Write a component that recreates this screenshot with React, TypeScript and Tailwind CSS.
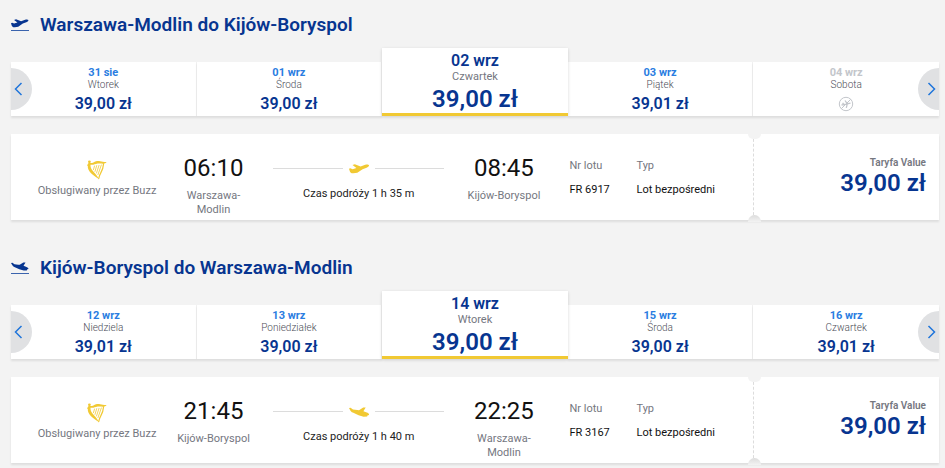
import { clsx } from "clsx";

interface Fare {
  date: string;
  weekday: string;
  price?: string;
  selected?: boolean;
}

interface Flight {
  departure: string;
  origin: string;
  arrival: string;
  destination: string;
  duration: string;
  number: string;
  price: string;
}

interface Journey {
  id: string;
  title: string;
  direction: "takeoff" | "landing";
  fares: Fare[];
  flight: Flight;
}

const journeys: Journey[] = [
  {
    id: "outbound",
    title: "Warszawa-Modlin do Kijów-Boryspol",
    direction: "takeoff",
    fares: [
      { date: "31 sie", weekday: "Wtorek", price: "39,00 zł" },
      { date: "01 wrz", weekday: "Środa", price: "39,00 zł" },
      { date: "02 wrz", weekday: "Czwartek", price: "39,00 zł", selected: true },
      { date: "03 wrz", weekday: "Piątek", price: "39,01 zł" },
      { date: "04 wrz", weekday: "Sobota" },
    ],
    flight: {
      departure: "06:10",
      origin: "Warszawa-Modlin",
      arrival: "08:45",
      destination: "Kijów-Boryspol",
      duration: "1 h 35 m",
      number: "FR 6917",
      price: "39,00 zł",
    },
  },
  {
    id: "inbound",
    title: "Kijów-Boryspol do Warszawa-Modlin",
    direction: "landing",
    fares: [
      { date: "12 wrz", weekday: "Niedziela", price: "39,01 zł" },
      { date: "13 wrz", weekday: "Poniedziałek", price: "39,00 zł" },
      { date: "14 wrz", weekday: "Wtorek", price: "39,00 zł", selected: true },
      { date: "15 wrz", weekday: "Środa", price: "39,00 zł" },
      { date: "16 wrz", weekday: "Czwartek", price: "39,01 zł" },
    ],
    flight: {
      departure: "21:45",
      origin: "Kijów-Boryspol",
      arrival: "22:25",
      destination: "Warszawa-Modlin",
      duration: "1 h 40 m",
      number: "FR 3167",
      price: "39,00 zł",
    },
  },
];

const planePaths = {
  takeoff:
    "M0 5.8 1.3 5.3 3.6 6.2 7.4 5 3.5 2 5.8 1.3 11.6 3.5 16.2 1.8C18 1.1 19.6 1.4 20 2.2c.3.9-.8 1.9-2.4 2.5L13.6 6.2 8.3 9.7 4.4 10.3C2.5 10.6 1.4 9.8.9 8.6Z",
  landing:
    "M0 2 1.6 1.8 4 3.6 8.3 4 10 4.2 14.2 1.4 16.7 1.6 14.4 5.2 17.8 6.6C19.4 7.2 20.3 8.1 20 8.9L18.4 9.4 18.2 10.6 14.6 10.8 9.6 9.2 3.8 6.6C2.4 6 1.7 5.2 1.2 4.2Z",
};

const HeaderPlane = ({ direction }: { direction: Journey["direction"] }) => (
  <svg viewBox="0 0 18 14" className="w-[18px] h-[14px]" aria-hidden="true">
    <path
      d={planePaths[direction]}
      transform="translate(0 .2) scale(.87)"
      fill="#073590"
    />
    <path d="M0 12.5h18" stroke="#3a63ad" />
  </svg>
);

const RoutePlane = ({ direction }: { direction: Journey["direction"] }) => (
  <svg viewBox="0 0 20 11" className="w-5 h-[11px]" aria-hidden="true">
    <path d={planePaths[direction]} fill="#f1c933" />
  </svg>
);

const Harp = () => (
  <svg viewBox="0 0 20 20" className="w-5 h-5" aria-hidden="true">
    <g fill="#f1c933">
      <circle cx="2.4" cy="1.8" r="1.4" />
      <path d="M1.2 3.2C3 2.6 4.6 3.2 6.4 2.4 8.8 1.3 10.4.8 13 1.2c2.2.4 4 .9 6.6.8-.8 1.3-2.2 1.8-3.8 1.7-2.4-.2-4.6-.4-6.8.3C6.6 4.7 4.9 5 3.5 4.8c-.2 2.3.7 4.4 2.4 6.3 2 2.3 4.2 4.3 5.9 7.9C8.7 16.7 5.9 14.9 3.8 12.9 1.7 10.7.6 8.6.8 6.1L.1 5.6Z" />
    </g>
    <g fill="none" stroke="#f1c933" strokeLinecap="round">
      <path
        d="M16.6 3.6c-.3 4-1.3 6.5-2.7 9-1 1.7-1.7 3.600-2.200 6"
        strokeWidth="1.2"
      />
      <path
        d="M7.5 6 6.5 9.6M9.7 5.6 8 11.4M12 5.4 9.5 13M14.3 5 11 14.6"
        strokeWidth=".8"
      />
    </g>
  </svg>
);

const NoFlight = () => (
  <svg
    viewBox="0 0 16 16"
    className="w-4 h-4"
    fill="none"
    stroke="#c3c6cb"
    role="img"
    aria-label="Brak lotów"
  >
    <circle cx="8" cy="8" r="6.7" />
    <path d="M3.3 12.7l9.4-9.4" />
    <path
      d="M3.5 9 12.5 7.2M7 4.5l2.300 3.300-1 4M4.800 6.800l.8 2.800"
      strokeWidth="1.3"
    />
  </svg>
);

const ArrowButton = ({ side }: { side: "left" | "right" }) => (
  <button
    type="button"
    aria-label={side === "left" ? "Poprzednie dni" : "Następne dni"}
    className={clsx(
      "absolute bottom-[6px] flex h-[42px] w-[21px] items-center bg-[#e0e1e3]",
      side === "left"
        ? "left-0 justify-start rounded-r-full pl-[3px]"
        : "right-0 justify-end rounded-l-full pr-[3px]",
    )}
  >
    <svg
      viewBox="0 0 9 14"
      className="w-[9px] h-[14px]"
      fill="none"
      stroke="#1f75db"
      strokeWidth="1.5"
    >
      <path d={side === "left" ? "M7.5 1l-6 6 6 6" : "M1.5 1l6 6-6 6"} />
    </svg>
  </button>
);

const FareDay = ({ fare }: { fare: Fare }) => {
  if (fare.selected) {
    return (
      <button
        type="button"
        aria-pressed="true"
        className="relative flex flex-col items-center border-b-3 border-[#f1c933] bg-white pt-[5px] font-semibold text-[#073590] shadow-[0_1px_3px_rgba(0,0,0,0.16)]"
      >
        <span className="text-base leading-4">{fare.date}</span>
        <span className="text-[11px] leading-4 font-normal text-[#75777f]">
          {fare.weekday}
        </span>
        <span className="text-2xl leading-7">{fare.price}</span>
      </button>
    );
  }

  return (
    <button
      type="button"
      disabled={!fare.price}
      className="flex flex-col items-center border-r border-[#f1f1f1] bg-white pt-[5px] shadow-[0_2px_2px_rgba(0,0,0,0.09)] last-of-type:border-r-0"
    >
      <span
        className={clsx(
          "text-[11px] leading-3 font-bold",
          fare.price ? "text-[#2a7de1]" : "text-[#c3c6cb]",
        )}
      >
        {fare.date}
      </span>
      <span className="text-[10px] leading-3 font-light text-[#4b4d57]">
        {fare.weekday}
      </span>
      <span className="mt-px flex h-6 items-center text-base font-semibold text-[#073590]">
        {fare.price ?? <NoFlight />}
      </span>
    </button>
  );
};

const Stop = ({ time, station }: { time: string; station: string }) => (
  <div className="w-[75px] text-center">
    <p className="text-2xl leading-6 text-[#111]">{time}</p>
    <p className="mt-[9px] text-[11px] leading-[14px] text-[#75777f]">
      {station}
    </p>
  </div>
);

const Detail = ({ label, value }: { label: string; value: string }) => (
  <div className="text-[11px] leading-6 whitespace-nowrap">
    <dt className="text-[#75777f]">{label}</dt>
    <dd className="text-[#111]">{value}</dd>
  </div>
);

const FlightCard = ({ journey }: { journey: Journey }) => {
  const { flight, direction } = journey;

  return (
    <article className="mt-[18px] flex bg-white shadow-[0_2px_2px_rgba(0,0,0,0.09)]">
      <div className="flex flex-1 pt-[22px] pr-[38px] pb-[3px] pl-[25px]">
        {/* Operator */}
        <div className="flex w-[122px] flex-col items-center pt-1">
          <Harp />
          <p className="mt-[5px] text-[11px] leading-3 whitespace-nowrap text-[#75777f]">
            Obsługiwany przez Buzz
          </p>
        </div>

        {/* Route */}
        <div className="ml-[18px] flex flex-1 gap-[22px]">
          <Stop time={flight.departure} station={flight.origin} />
          <div className="flex-1 pt-1">
            <div className="flex h-4 items-center gap-1.5">
              <span className="h-px flex-1 bg-[#dcdcdc]" />
              <RoutePlane direction={direction} />
              <span className="h-px flex-1 bg-[#dcdcdc]" />
            </div>
            <p className="mt-[11px] text-center text-[11px] leading-[14px] text-[#222]">
              Czas podróży {flight.duration}
            </p>
          </div>
          <Stop time={flight.arrival} station={flight.destination} />
        </div>

        <dl className="-mt-0.5 ml-7 flex">
          <div className="w-[67px]">
            <Detail label="Nr lotu" value={flight.number} />
          </div>
          <Detail label="Typ" value="Lot bezpośredni" />
        </dl>
      </div>

      {/* Ticket perforation */}
      <div className="relative w-px border-l border-dashed border-[#dcdcdc]">
        <span className="absolute top-0 -left-[6px] h-[5px] w-[13px] rounded-b-full bg-[#f3f3f3]" />
        <span className="absolute -bottom-[2px] -left-[6px] h-[7px] w-[13px] rounded-t-full bg-linear-to-b from-[#dcdcdc] to-[#f3f3f3]" />
      </div>

      <div className="flex w-[185px] flex-col items-end pt-[23px] pr-[13px] font-semibold">
        <p className="text-[10px] leading-3 text-[#75777f]">Taryfa Value</p>
        <p className="text-2xl leading-7 text-[#073590]">{flight.price}</p>
      </div>
    </article>
  );
};

const JourneySection = ({ journey }: { journey: Journey }) => (
  <section aria-labelledby={journey.id}>
    <header className="flex h-12 items-center gap-[11px] pt-0.5">
      <HeaderPlane direction={journey.direction} />
      <h2 id={journey.id} className="text-[19px] font-semibold text-[#073590]">
        {journey.title}
      </h2>
    </header>
    <div className="relative">
      <div className="grid grid-cols-5 items-end">
        {journey.fares.map((fare) => (
          <FareDay key={fare.date} fare={fare} />
        ))}
      </div>
      <ArrowButton side="left" />
      <ArrowButton side="right" />
    </div>
    <FlightCard journey={journey} />
  </section>
);

const App = () => (
  <main className="flex min-h-screen flex-col gap-[23px] bg-[#f3f3f3] pr-1.5 pb-1 pl-[11px] font-['Roboto',sans-serif]">
    {journeys.map((journey) => (
      <JourneySection key={journey.id} journey={journey} />
    ))}
  </main>
);

export default App;
